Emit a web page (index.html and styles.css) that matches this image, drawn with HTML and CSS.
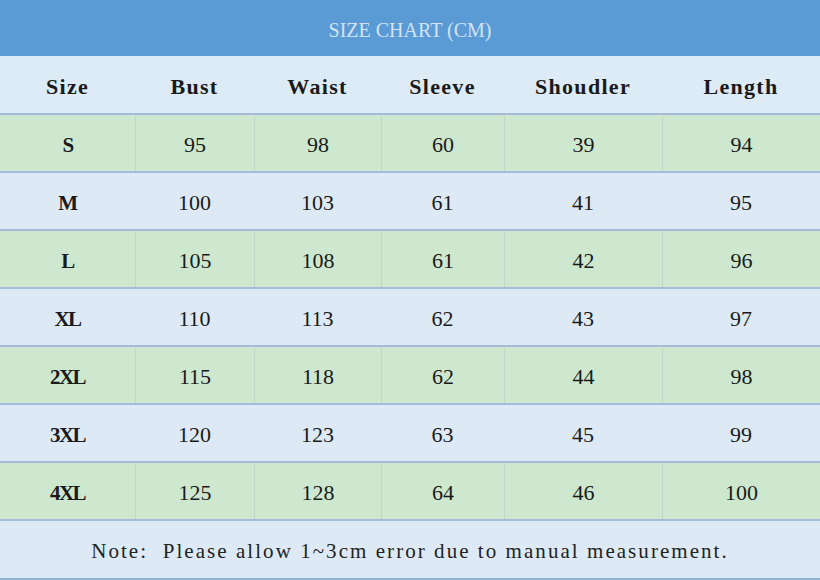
FILE: index.html
```html
<!DOCTYPE html>
<html>
<head>
<meta charset="utf-8">
<link rel="stylesheet" href="styles.css">
</head>
<body>
<div class="chart">
  <div class="title">SIZE CHART (CM)</div>
  <div class="row head">
    <div class="cell">Size</div><div class="cell">Bust</div><div class="cell">Waist</div><div class="cell">Sleeve</div><div class="cell">Shoudler</div><div class="cell">Length</div>
  </div>
  <div class="row green"><div class="cell size">S</div><div class="cell">95</div><div class="cell">98</div><div class="cell">60</div><div class="cell">39</div><div class="cell">94</div></div>
  <div class="row blue"><div class="cell size">M</div><div class="cell">100</div><div class="cell">103</div><div class="cell">61</div><div class="cell">41</div><div class="cell">95</div></div>
  <div class="row green"><div class="cell size">L</div><div class="cell">105</div><div class="cell">108</div><div class="cell">61</div><div class="cell">42</div><div class="cell">96</div></div>
  <div class="row blue"><div class="cell size">XL</div><div class="cell">110</div><div class="cell">113</div><div class="cell">62</div><div class="cell">43</div><div class="cell">97</div></div>
  <div class="row green"><div class="cell size">2XL</div><div class="cell">115</div><div class="cell">118</div><div class="cell">62</div><div class="cell">44</div><div class="cell">98</div></div>
  <div class="row blue"><div class="cell size">3XL</div><div class="cell">120</div><div class="cell">123</div><div class="cell">63</div><div class="cell">45</div><div class="cell">99</div></div>
  <div class="row green"><div class="cell size">4XL</div><div class="cell">125</div><div class="cell">128</div><div class="cell">64</div><div class="cell">46</div><div class="cell">100</div></div>
  <div class="note">Note:&nbsp; Please allow 1~3cm error due to manual measurement.</div>
</div>
</body>
</html>
```
FILE: styles.css
```css
* { box-sizing: border-box; }
html, body { margin: 0; padding: 0; background: #dde9f5; }
.chart {
  width: 820px;
  height: 580px;
  display: flex;
  flex-direction: column;
  font-family: "Liberation Serif", "Times New Roman", serif;
  color: #1a1a1a;
}
.title {
  height: 56px;
  background: #5b9bd5;
  color: #d3e2f1;
  font-size: 20px;
  display: flex;
  align-items: center;
  justify-content: center;
  padding-top: 4px;
}
.row {
  height: 58px;
  display: grid;
  grid-template-columns: 135px 119px 127px 123px 158px 158px;
  border-bottom: 2px solid #a3bdd8;
}
.row.head {
  background: #ddebf6;
  font-weight: bold;
  height: 59px;
}
.row.head .cell {
  font-size: 22px;
  letter-spacing: 1.3px;
  padding-top: 5px;
}
.row.green { background: #cde8cf; }
.row.green .cell + .cell { border-left: 1px solid #c0d6c6; }
.row.blue { background: #ddeaf6; }
.cell {
  display: flex;
  align-items: center;
  justify-content: center;
  font-size: 22px;
  padding-top: 4px;
}
.cell.size { font-weight: bold; font-size: 21px; letter-spacing: -1.5px; }
.note {
  flex: 1;
  background: #ddeaf6;
  display: flex;
  align-items: center;
  justify-content: center;
  font-size: 21px;
  letter-spacing: 2.05px;
  color: #222;
  padding-top: 3px;
  border-bottom: 2px solid #8fb0d4;
}
```
